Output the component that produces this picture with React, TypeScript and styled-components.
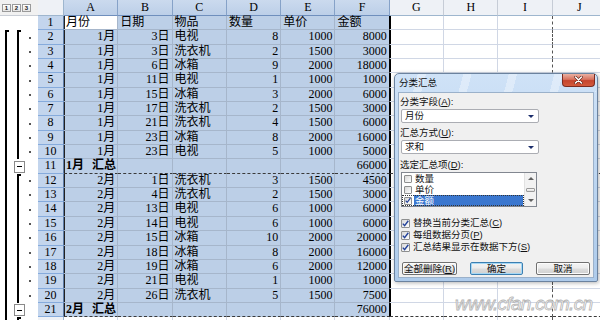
import React from "react";
import styled, { createGlobalStyle } from "styled-components";

const GlobalStyle = createGlobalStyle`
  html, body {
    margin: 0;
    padding: 0;
    background: #fff;
  }
  body {
    width: 600px;
    height: 320px;
    overflow: hidden;
    font-family: "Liberation Serif", "Noto Sans CJK SC", serif;
    color: #000;
  }
`;

const COL_W = 54.3;
const ROW_H = 14.35;
const HEAD_H = 16;
const COLS = ["A", "B", "C", "D", "E", "F", "G", "H", "I", "J"];
const DETAIL_ALIGN = ["right", "right", "left", "right", "right", "right"];

type Kind = "title" | "detail" | "subtotal";

interface SheetRow {
  kind: Kind;
  values: string[];
}

const detail = (values: string[]): SheetRow => ({ kind: "detail", values });

const sheetRows: SheetRow[] = [
  { kind: "title", values: ["月份", "日期", "物品", "数量", "单价", "金额"] },
  detail(["1月", "3日", "电视", "8", "1000", "8000"]),
  detail(["1月", "3日", "洗衣机", "2", "1500", "3000"]),
  detail(["1月", "6日", "冰箱", "9", "2000", "18000"]),
  detail(["1月", "11日", "电视", "1", "1000", "1000"]),
  detail(["1月", "15日", "冰箱", "3", "2000", "6000"]),
  detail(["1月", "17日", "洗衣机", "2", "1500", "3000"]),
  detail(["1月", "21日", "洗衣机", "4", "1500", "6000"]),
  detail(["1月", "23日", "冰箱", "8", "2000", "16000"]),
  detail(["1月", "23日", "电视", "5", "1000", "5000"]),
  { kind: "subtotal", values: ["1月 汇总", "", "", "", "", "66000"] },
  detail(["2月", "1日", "洗衣机", "3", "1500", "4500"]),
  detail(["2月", "4日", "洗衣机", "2", "1500", "3000"]),
  detail(["2月", "13日", "电视", "6", "1000", "6000"]),
  detail(["2月", "14日", "电视", "6", "1000", "6000"]),
  detail(["2月", "15日", "冰箱", "10", "2000", "20000"]),
  detail(["2月", "18日", "冰箱", "8", "2000", "16000"]),
  detail(["2月", "19日", "冰箱", "6", "2000", "12000"]),
  detail(["2月", "21日", "电视", "1", "1000", "1000"]),
  detail(["2月", "26日", "洗衣机", "5", "1500", "7500"]),
  { kind: "subtotal", values: ["2月 汇总", "", "", "", "", "76000"] },
  // only the top edge of row 22 shows below the window
  detail([]),
];

/* ---------- sheet ---------- */

const Page = styled.div`
  position: relative;
  width: 600px;
  height: 320px;
  overflow: hidden;
`;

const Sheet = styled.div`
  display: flex;
  flex-direction: column;
`;

const HeaderRow = styled.div`
  display: flex;
  flex: none;
  height: ${HEAD_H}px;
`;

const Row = styled.div`
  display: flex;
  flex: none;
  height: ${ROW_H}px;
`;

const OutlineHead = styled.div`
  flex: none;
  width: 38px;
  height: 100%;
  box-sizing: border-box;
  display: flex;
  align-items: center;
  gap: 1px;
  padding-left: 2px;
  background: #f1f1f1;
  border-bottom: 1px solid #c9ced6;
`;

const LevelButton = styled.div`
  width: 9px;
  height: 8px;
  box-sizing: border-box;
  border: 1px solid #9a9a9a;
  background: linear-gradient(#ffffff, #e4e4e4);
  font: 700 6px/6px "Liberation Sans", sans-serif;
  text-align: center;
  color: #222;
`;

const Corner = styled.div`
  flex: none;
  width: 26px;
  height: 100%;
  box-sizing: border-box;
  background: #eef1f6;
  border-right: 1px solid #9eb6ce;
  border-bottom: 1px solid #9eb6ce;
`;

const ColHeader = styled.div<{ $sel: boolean }>`
  flex: none;
  width: ${COL_W}px;
  height: 100%;
  box-sizing: border-box;
  background: ${(p) => (p.$sel ? "linear-gradient(#cbdaee, #bccfe8)" : "#eef1f6")};
  border-right: 1px solid ${(p) => (p.$sel ? "#86a2c8" : "#c6ccd6")};
  border-bottom: 1px solid ${(p) => (p.$sel ? "#6f8fbd" : "#9eb6ce")};
  font-size: 12px;
  line-height: 15px;
  text-align: center;
`;

const OutlineCell = styled.div`
  flex: none;
  width: 38px;
  height: 100%;
  display: flex;
  background: #fff;
`;

const OutlineSlot = styled.div<{ $w: number }>`
  flex: none;
  width: ${(p) => p.$w}px;
  height: 100%;
  display: flex;
  align-items: center;
`;

const LevelLine = styled.div<{ $start?: boolean }>`
  align-self: stretch;
  margin-left: 5px;
  width: 4px;
  box-sizing: border-box;
  border-left: 2px solid #000;
  border-top: ${(p) => (p.$start ? "2px solid #000" : "none")};
`;

const CollapseBox = styled.div`
  margin-left: 2px;
  width: 11px;
  height: 12px;
  box-sizing: border-box;
  border: 1px solid #8a8a8a;
  background: #fff;
  display: flex;
  align-items: center;
  justify-content: center;

  &::before {
    content: "";
    width: 5px;
    height: 1px;
    background: #000;
  }
`;

const DetailDot = styled.div`
  margin-left: 3px;
  width: 2px;
  height: 2px;
  background: #555;
`;

const RowHeader = styled.div<{ $sel: boolean }>`
  flex: none;
  width: 26px;
  height: 100%;
  box-sizing: border-box;
  background: ${(p) => (p.$sel ? "#c3d5ed" : "#eef1f6")};
  border-bottom: 1px solid ${(p) => (p.$sel ? "#86abdc" : "#c6ccd6")};
  border-right: 1px solid ${(p) => (p.$sel ? "#5d7ba6" : "#9eb6ce")};
  font-size: 12px;
  line-height: 13px;
  text-align: center;
`;

interface CellProps {
  $align: string;
  $sel: boolean;
  $active: boolean;
  $leftEdge: boolean;
  $rightEdge: boolean;
  $afterSel: boolean;
  $pageRight: boolean;
  $pageBottom: boolean;
  $bold: boolean;
  $front: boolean;
}

const Cell = styled.div<CellProps>`
  flex: none;
  width: ${COL_W}px;
  height: 100%;
  box-sizing: border-box;
  padding: 0 2px;
  background: ${(p) => (p.$sel && !p.$active ? "#bccfe7" : "#fff")};
  border-right: 1px
    ${(p) =>
      p.$rightEdge
        ? "solid #000"
        : p.$pageRight
        ? "dashed #555"
        : p.$sel
        ? "solid #a6b6cb"
        : "solid #d0d7e5"};
  border-bottom: 1px
    ${(p) => (p.$pageBottom ? "dashed #3a3a3a" : p.$sel ? "solid #a6b6cb" : "solid #d0d7e5")};
  box-shadow: ${(p) =>
    p.$leftEdge ? "inset 1px 0 0 #222" : p.$afterSel ? "inset 1px 0 0 #000" : "none"};
  text-align: ${(p) => p.$align};
  font-size: 12px;
  line-height: 13px;
  font-weight: ${(p) => (p.$bold ? 700 : 400)};
  word-spacing: ${(p) => (p.$bold ? "5px" : "normal")};
  white-space: nowrap;
  position: ${(p) => (p.$front ? "relative" : "static")};
  z-index: ${(p) => (p.$front ? 1 : "auto")};
`;

const Outline = ({ index }: { index: number }) => {
  const num = index + 1;
  const kind = sheetRows[index].kind;
  const prevKind = index > 0 ? sheetRows[index - 1].kind : "title";
  return (
    <OutlineCell>
      <OutlineSlot $w={12}>{num >= 2 && <LevelLine $start={num === 2} />}</OutlineSlot>
      <OutlineSlot $w={14}>
        {kind === "subtotal" && <CollapseBox />}
        {kind === "detail" && <LevelLine $start={prevKind !== "detail"} />}
      </OutlineSlot>
      <OutlineSlot $w={12}>{kind === "detail" && num <= 21 && <DetailDot />}</OutlineSlot>
    </OutlineCell>
  );
};

const SheetLine = ({ index }: { index: number }) => {
  const row = sheetRows[index];
  const num = index + 1;
  const sel = num <= 21;
  const subtotal = row.kind === "subtotal";

  return (
    <Row>
      <Outline index={index} />
      <RowHeader $sel={sel}>{num <= 21 ? num : ""}</RowHeader>
      {COLS.map((c, i) => {
        const align =
          row.kind === "detail" ? DETAIL_ALIGN[i] ?? "left" : subtotal && i === 5 ? "right" : "left";
        return (
          <Cell
            key={c}
            $align={align}
            $sel={sel && i < 6}
            $active={num === 1 && i === 0}
            $leftEdge={sel && i === 0}
            $rightEdge={sel && i === 5}
            $afterSel={sel && i === 6}
            $pageRight={i === 8}
            $pageBottom={subtotal}
            $bold={subtotal && i === 0}
            $front={subtotal && i === 0}
          >
            {row.values[i] ?? ""}
          </Cell>
        );
      })}
    </Row>
  );
};

/* ---------- dialog ---------- */

const Dialog = styled.div`
  position: absolute;
  left: 394px;
  top: 73px;
  width: 204px;
  height: 209px;
  box-sizing: border-box;
  border: 1px solid #6b829e;
  border-radius: 5px 5px 2px 2px;
  background: linear-gradient(180deg, #cfe2f7 0%, #b9d3ef 60%, #aecbeb 100%);
  padding: 0 3px 3px 3px;
  display: flex;
  flex-direction: column;
  box-shadow: 1px 1px 4px rgba(0, 0, 0, 0.3);
  font-family: "Liberation Sans", "Noto Sans CJK SC", sans-serif;
`;

const TitleBar = styled.div`
  flex: none;
  height: 18px;
  margin: 0 -2px 0 -3px;
  padding-left: 4px;
  display: flex;
  justify-content: space-between;
  align-items: flex-start;
  background: repeating-linear-gradient(
    105deg,
    rgba(255, 255, 255, 0) 0 22px,
    rgba(255, 255, 255, 0.35) 22px 30px,
    rgba(255, 255, 255, 0) 30px 44px
  );
`;

const Title = styled.div`
  margin-top: 3px;
  font-size: 9.5px;
  line-height: 12px;
  color: #111;
`;

const CloseButton = styled.div`
  margin-right: 1px;
  width: 33px;
  height: 13px;
  box-sizing: border-box;
  border: 1px solid #7b2b20;
  border-top: none;
  border-radius: 0 0 4px 4px;
  background: linear-gradient(180deg, #eab0a2 0%, #d8725e 45%, #c5452e 55%, #d35a3c 100%);
  display: flex;
  align-items: center;
  justify-content: center;
`;

const DialogBody = styled.div`
  flex: 1;
  box-sizing: border-box;
  border: 1px solid #9bb1ca;
  background: #f0f0f0;
  padding: 3px 2px 0 2px;
  display: flex;
  flex-direction: column;
  font-size: 9.5px;
  color: #111;
`;

const FieldLabel = styled.div<{ $gap?: number }>`
  margin-top: ${(p) => p.$gap ?? 0}px;
  margin-left: -1px;
  height: 12px;
  line-height: 12px;
  white-space: nowrap;
`;

const Acc = styled.span`
  text-decoration: underline;
`;

const Combo = styled.div`
  margin-top: 1px;
  width: 138px;
  height: 14px;
  box-sizing: border-box;
  border: 1px solid #abadb3;
  border-radius: 2px;
  background: #fff;
  display: flex;
  align-items: center;
  justify-content: space-between;
  padding: 0 4px 0 3px;
  line-height: 12px;
`;

const ComboArrow = styled.div`
  width: 0;
  height: 0;
  border-left: 3px solid transparent;
  border-right: 3px solid transparent;
  border-top: 3px solid #1b2d6b;
`;

const ListBox = styled.div`
  margin-top: 1px;
  width: 136px;
  height: 35px;
  box-sizing: border-box;
  border: 1px solid #828790;
  background: #fff;
  display: flex;
`;

const ListItems = styled.div`
  flex: 1;
  display: flex;
  flex-direction: column;
`;

const ListItem = styled.div<{ $selected?: boolean }>`
  height: 11px;
  box-sizing: border-box;
  display: flex;
  align-items: center;
  gap: 2px;
  padding-left: 2px;
  outline: ${(p) => (p.$selected ? "1px dotted #333" : "none")};
  outline-offset: -1px;
`;

const ItemText = styled.div<{ $selected?: boolean }>`
  flex: 1;
  align-self: stretch;
  margin-right: 1px;
  padding-left: 1px;
  line-height: 11px;
  background: ${(p) => (p.$selected ? "#3b77cf" : "transparent")};
  color: ${(p) => (p.$selected ? "#fff" : "#111")};
`;

const ScrollBar = styled.div`
  flex: none;
  width: 11px;
  display: flex;
  flex-direction: column;
  background: #f2f2f2;
  border-left: 1px solid #e2e2e2;
`;

const ScrollPart = styled.div`
  flex: 1;
  display: flex;
  align-items: center;
  justify-content: center;
`;

const ScrollArrow = styled.div<{ $down?: boolean }>`
  width: 0;
  height: 0;
  border-left: 3px solid transparent;
  border-right: 3px solid transparent;
  ${(p) => (p.$down ? "border-top: 3px solid #606060;" : "border-bottom: 3px solid #606060;")}
`;

const ScrollThumb = styled.div`
  width: 9px;
  height: 4px;
  box-sizing: border-box;
  border: 1px solid #9a9a9a;
  border-radius: 1px;
  background: linear-gradient(#fafafa, #dcdcdc);
`;

const CheckBox = styled.div<{ $size: number }>`
  flex: none;
  width: ${(p) => p.$size}px;
  height: ${(p) => p.$size}px;
  box-sizing: border-box;
  border: 1px solid #8e8f8f;
  border-radius: 1px;
  background: linear-gradient(135deg, #d8d8d8, #ffffff);
  display: flex;
  align-items: center;
  justify-content: center;
`;

const CheckGroup = styled.div`
  margin-top: 10px;
  display: flex;
  flex-direction: column;
`;

const CheckRow = styled.div`
  height: 12px;
  display: flex;
  align-items: center;
  gap: 3px;
  white-space: nowrap;
  line-height: 12px;
`;

const ButtonRow = styled.div`
  margin-top: 9px;
  padding: 0 1px;
  display: flex;
  justify-content: space-between;
`;

const DialogButton = styled.div<{ $w: number; $default?: boolean }>`
  width: ${(p) => p.$w}px;
  height: 13px;
  box-sizing: border-box;
  border: 1px solid ${(p) => (p.$default ? "#3c7fb1" : "#707070")};
  border-radius: 2px;
  background: linear-gradient(#f4f4f4 0%, #ececec 48%, #dddddd 52%, #d0d0d0 100%);
  box-shadow: ${(p) => (p.$default ? "inset 0 0 0 1px #a6d8f5" : "inset 0 0 0 1px #fcfcfc")};
  text-align: center;
  line-height: 11px;
  white-space: nowrap;
`;

const Watermark = styled.div`
  position: absolute;
  left: 455px;
  top: 294px;
  font: italic 400 19px/20px "Liberation Sans", sans-serif;
  letter-spacing: -0.7px;
  color: rgba(255, 255, 255, 0.7);
  -webkit-text-stroke: 0.8px #b4b4b4;
  white-space: nowrap;
`;

const Check = () => (
  <svg width="7" height="7" viewBox="0 0 7 7">
    <path d="M0.8 3.6 L2.6 5.6 L6.3 0.8" fill="none" stroke="#23429a" strokeWidth="1.4" />
  </svg>
);

const CloseGlyph = () => (
  <svg width="9" height="8" viewBox="0 0 9 8">
    <path d="M1.5 1 L7.5 7 M7.5 1 L1.5 7" stroke="#5a1a10" strokeWidth="2.6" strokeLinecap="round" />
    <path d="M1.5 1 L7.5 7 M7.5 1 L1.5 7" stroke="#fff" strokeWidth="1.6" strokeLinecap="round" />
  </svg>
);

const listItems = [
  { label: "数量", checked: false },
  { label: "单价", checked: false },
  { label: "金额", checked: true },
];

const options = [
  { label: "替换当前分类汇总", key: "C" },
  { label: "每组数据分页", key: "P" },
  { label: "汇总结果显示在数据下方", key: "S" },
];

const SubtotalDialog = () => (
  <Dialog>
    <TitleBar>
      <Title>分类汇总</Title>
      <CloseButton>
        <CloseGlyph />
      </CloseButton>
    </TitleBar>
    <DialogBody>
      <FieldLabel>
        分类字段(<Acc>A</Acc>):
      </FieldLabel>
      <Combo>
        <span>月份</span>
        <ComboArrow />
      </Combo>
      <FieldLabel $gap={4}>
        汇总方式(<Acc>U</Acc>):
      </FieldLabel>
      <Combo>
        <span>求和</span>
        <ComboArrow />
      </Combo>
      <FieldLabel $gap={5}>
        选定汇总项(<Acc>D</Acc>):
      </FieldLabel>
      <ListBox>
        <ListItems>
          {listItems.map((item) => (
            <ListItem key={item.label} $selected={item.checked}>
              <CheckBox $size={8}>{item.checked && <Check />}</CheckBox>
              <ItemText $selected={item.checked}>{item.label}</ItemText>
            </ListItem>
          ))}
        </ListItems>
        <ScrollBar>
          <ScrollPart>
            <ScrollArrow />
          </ScrollPart>
          <ScrollPart>
            <ScrollThumb />
          </ScrollPart>
          <ScrollPart>
            <ScrollArrow $down />
          </ScrollPart>
        </ScrollBar>
      </ListBox>
      <CheckGroup>
        {options.map((opt) => (
          <CheckRow key={opt.key}>
            <CheckBox $size={9}>
              <Check />
            </CheckBox>
            <span>
              {opt.label}(<Acc>{opt.key}</Acc>)
            </span>
          </CheckRow>
        ))}
      </CheckGroup>
      <ButtonRow>
        <DialogButton $w={55}>
          全部删除(<Acc>R</Acc>)
        </DialogButton>
        <DialogButton $w={53} $default>
          确定
        </DialogButton>
        <DialogButton $w={54}>取消</DialogButton>
      </ButtonRow>
    </DialogBody>
  </Dialog>
);

const App = () => (
  <>
    <GlobalStyle />
    <Page>
      <Sheet>
        <HeaderRow>
          <OutlineHead>
            {[1, 2, 3].map((n) => (
              <LevelButton key={n}>{n}</LevelButton>
            ))}
          </OutlineHead>
          <Corner />
          {COLS.map((c, i) => (
            <ColHeader key={c} $sel={i < 6}>
              {c}
            </ColHeader>
          ))}
        </HeaderRow>
        {sheetRows.map((_, index) => (
          <SheetLine key={index} index={index} />
        ))}
      </Sheet>
      <SubtotalDialog />
      <Watermark>www.cfan.com.cn</Watermark>
    </Page>
  </>
);

export default App;
